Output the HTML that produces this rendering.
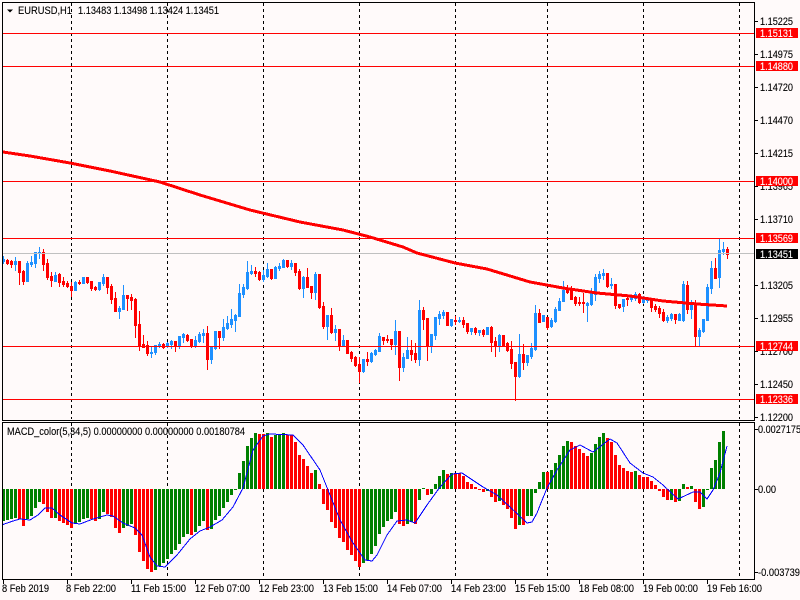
<!DOCTYPE html>
<html><head><meta charset="utf-8"><title>EURUSD,H1</title>
<style>
html,body{margin:0;padding:0;background:#fffafa;width:800px;height:600px;overflow:hidden}
svg{display:block}
text{font-family:"Liberation Sans",sans-serif;font-size:11px;fill:#000;stroke:#000;stroke-width:.12px}
text.w{fill:#fff;stroke:#fff}
</style></head><body>
<svg width="800" height="600" viewBox="0 0 800 600" xmlns="http://www.w3.org/2000/svg">
<rect width="800" height="600" fill="#fffafa"/>
<g shape-rendering="crispEdges" fill="none">
<path stroke="#000" stroke-dasharray="3 3" d="M71.5 3V419M167.5 3V419M263.5 3V419M359.5 3V419M455.5 3V419M547.5 3V419M643.5 3V419M739.5 3V419M71.5 423V579M167.5 423V579M263.5 423V579M359.5 423V579M455.5 423V579M547.5 423V579M643.5 423V579M739.5 423V579"/>
<!-- histogram -->
<path stroke="#008000" stroke-width="3" d="M3.5 489V521M7.5 489V520M11.5 489V519M15.5 489V518M27.5 489V519M31.5 489V516M35.5 489V508M39.5 489V502M55.5 489V518M75.5 489V524M79.5 489V522M83.5 489V519M87.5 489V518M99.5 489V519M103.5 489V512M123.5 489V528M127.5 489V526M131.5 489V524M155.5 489V570M159.5 489V566M163.5 489V563M167.5 489V559M171.5 489V554M175.5 489V550M179.5 489V544M183.5 489V537M187.5 489V534M195.5 489V532M199.5 489V526M203.5 489V521M211.5 489V529M215.5 489V520M219.5 489V516M223.5 489V508M227.5 489V502M231.5 489V495M235.5 489V490M239.5 473V489M243.5 461V489M247.5 446V489M251.5 438V489M255.5 433V489M267.5 433V489M275.5 435V489M279.5 435V489M283.5 433V489M315.5 470V489M363.5 489V563M367.5 489V560M371.5 489V554M375.5 489V546M379.5 489V534M383.5 489V527M387.5 489V521M391.5 489V519M395.5 489V512M407.5 489V524M411.5 489V522M419.5 489V500M423.5 488V489M431.5 489V494M435.5 484V489M439.5 476V489M443.5 470V489M451.5 473V489M487.5 489V491M499.5 489V501M519.5 489V525M527.5 489V516M531.5 489V516M535.5 489V493M539.5 482V489M543.5 472V489M551.5 470V489M555.5 463V489M559.5 455V489M563.5 446V489M567.5 441V489M591.5 453V489M595.5 444V489M599.5 437V489M603.5 433V489M635.5 471V489M671.5 489V500M679.5 489V501M683.5 484V489M691.5 486V489M703.5 489V507M707.5 489V490M711.5 468V489M715.5 460V489M719.5 442V489M723.5 431V489"/>
<path stroke="#ff0000" stroke-width="3" d="M19.5 489V519M23.5 489V526M43.5 489V504M47.5 489V512M51.5 489V518M59.5 489V521M63.5 489V523M67.5 489V525M71.5 489V528M91.5 489V519M95.5 489V521M107.5 489V514M111.5 489V517M115.5 489V528M119.5 489V533M135.5 489V535M139.5 489V552M143.5 489V561M147.5 489V569M151.5 489V572M191.5 489V535M207.5 489V530M259.5 434V489M263.5 434V489M271.5 437V489M287.5 435V489M291.5 435V489M295.5 442V489M299.5 455V489M303.5 459V489M307.5 466V489M311.5 473V489M319.5 484V489M323.5 489V504M327.5 489V510M331.5 489V522M335.5 489V528M339.5 489V538M343.5 489V542M347.5 489V550M351.5 489V555M355.5 489V561M359.5 489V567M399.5 489V524M403.5 489V526M415.5 489V524M427.5 489V495M447.5 474V489M455.5 473V489M459.5 473V489M463.5 476V489M467.5 482V489M471.5 484V489M475.5 487V489M479.5 489V490M483.5 489V492M491.5 489V497M495.5 489V502M503.5 489V505M507.5 489V509M511.5 489V518M515.5 489V529M523.5 489V525M547.5 472V489M571.5 442V489M575.5 446V489M579.5 449V489M583.5 453V489M587.5 456V489M607.5 438V489M611.5 442V489M615.5 455V489M619.5 465V489M623.5 468V489M627.5 471V489M631.5 472V489M639.5 475V489M643.5 477V489M647.5 477V489M651.5 481V489M655.5 485V489M659.5 489V491M663.5 489V497M667.5 489V500M675.5 489V502M687.5 487V489M695.5 489V502M699.5 489V509"/>
<!-- blue candles -->
<path stroke="#1e90ff" d="M3.5 256V264M15.5 257V271M27.5 261V282M31.5 256V267M35.5 252V268M39.5 247V259M55.5 272V282M75.5 281V291M83.5 277V284M99.5 282V291M103.5 274V286M119.5 306V319M123.5 285V310M151.5 347V358M155.5 345V355M159.5 342V348M167.5 342V348M171.5 340V349M179.5 336V349M183.5 333V343M195.5 336V348M199.5 332V343M203.5 329V343M211.5 346V364M215.5 331V350M223.5 319V341M227.5 316V330M231.5 309V328M235.5 314V332M239.5 284V317M243.5 284V298M247.5 261V290M251.5 265V275M263.5 270V282M267.5 263V278M275.5 266V279M279.5 263V271M283.5 259V268M291.5 260V270M303.5 276V298M315.5 272V300M327.5 315V340M335.5 325V341M343.5 335V346M363.5 359V373M371.5 352V363M375.5 349V356M379.5 333V352M395.5 320V355M403.5 353V372M407.5 337V359M419.5 300V366M431.5 334V353M435.5 317V340M439.5 311V325M443.5 310V319M451.5 319V327M459.5 317V323M471.5 328V335M479.5 330V336M487.5 327V335M499.5 334V352M519.5 334V378M527.5 355V366M531.5 343V359M535.5 305V351M543.5 315V322M551.5 318V328M555.5 307V323M559.5 298V311M563.5 281V302M587.5 302V322M591.5 288V306M595.5 274V301M599.5 271V283M603.5 269V280M611.5 278V289M623.5 299V312M631.5 295V302M635.5 292V301M643.5 296V304M647.5 297V303M667.5 315V323M671.5 313V321M679.5 313V321M683.5 281V322M691.5 300V319M699.5 328V346M703.5 319V333M707.5 284V321M711.5 261V294M719.5 238V288M723.5 242V255"/>
<path stroke="#1e90ff" stroke-width="3" d="M3.5 259V262M15.5 261V265M27.5 263V282M31.5 262V265M35.5 252V264M39.5 252V254M55.5 275V282M75.5 282V291M83.5 277V284M99.5 282V290M103.5 277V284M119.5 308V312M123.5 295V310M151.5 352V354M155.5 345V353M159.5 344V347M167.5 343V347M171.5 341V345M179.5 336V347M183.5 334V338M195.5 340V346M199.5 334V342M203.5 333V336M211.5 347V360M215.5 331V349M223.5 327V338M227.5 323V329M231.5 319V325M235.5 315V321M239.5 293V317M243.5 287V295M247.5 272V289M251.5 271V274M263.5 275V280M267.5 269V277M275.5 267V279M279.5 266V269M283.5 260V268M291.5 263V267M303.5 277V289M315.5 274V293M327.5 315V327M335.5 329V333M343.5 340V346M363.5 359V372M371.5 353V362M375.5 350V355M379.5 336V352M395.5 331V345M403.5 357V368M407.5 350V359M419.5 310V360M431.5 334V346M435.5 317V336M439.5 314V319M443.5 312V316M451.5 319V326M459.5 320V322M471.5 328V332M479.5 330V333M487.5 327V335M499.5 335V346M519.5 354V377M527.5 355V363M531.5 348V357M535.5 313V350M543.5 315V322M551.5 320V327M555.5 309V322M559.5 301V311M563.5 290V302M587.5 303V306M591.5 293V305M595.5 277V295M599.5 274V279M603.5 273V276M611.5 284V286M623.5 299V307M631.5 297V300M635.5 294V299M643.5 299V303M647.5 298V301M667.5 317V321M671.5 314V319M679.5 314V321M683.5 284V321M691.5 304V310M699.5 330V337M703.5 319V332M707.5 287V321M711.5 268V289M719.5 250V278M723.5 249V252"/>
<!-- red candles -->
<path stroke="#ff0000" d="M7.5 259V265M11.5 260V268M19.5 261V285M23.5 270V285M43.5 249V271M47.5 259V280M51.5 272V287M59.5 273V287M63.5 277V287M67.5 281V288M71.5 282V297M79.5 280V285M87.5 277V284M91.5 281V291M95.5 286V291M107.5 277V294M111.5 284V304M115.5 292V312M127.5 295V311M131.5 294V310M135.5 298V338M139.5 311V351M143.5 335V348M147.5 341V356M163.5 343V349M175.5 341V352M187.5 334V342M191.5 339V348M207.5 326V370M219.5 331V349M255.5 267V277M259.5 271V281M271.5 269V280M287.5 260V268M295.5 263V276M299.5 269V290M307.5 268V288M311.5 286V299M319.5 274V309M323.5 302V329M331.5 308V334M339.5 329V351M347.5 340V354M351.5 351V362M355.5 356V367M359.5 357V383M367.5 352V366M383.5 337V345M387.5 335V343M391.5 339V350M399.5 331V381M411.5 340V361M415.5 343V363M423.5 307V330M427.5 318V361M447.5 312V326M455.5 316V325M463.5 317V328M467.5 323V334M475.5 327V335M483.5 329V337M491.5 326V352M495.5 337V357M503.5 335V347M507.5 342V352M511.5 341V369M515.5 362V401M523.5 344V370M539.5 309V323M547.5 317V330M567.5 285V294M571.5 286V300M575.5 296V306M579.5 297V306M583.5 293V313M607.5 273V288M615.5 284V309M619.5 304V309M627.5 295V306M639.5 293V304M651.5 298V312M655.5 304V312M659.5 306V318M663.5 309V322M675.5 314V324M687.5 281V314M695.5 300V347M715.5 258V279M727.5 247V259"/>
<path stroke="#ff0000" stroke-width="3" d="M7.5 260V264M11.5 261V265M19.5 261V273M23.5 271V282M43.5 252V265M47.5 263V278M51.5 276V281M59.5 274V283M63.5 281V285M67.5 283V287M71.5 286V291M79.5 282V284M87.5 277V283M91.5 281V289M95.5 287V290M107.5 277V288M111.5 286V300M115.5 298V312M127.5 295V299M131.5 297V301M135.5 299V326M139.5 324V346M143.5 344V348M147.5 345V354M163.5 344V348M175.5 341V347M187.5 335V341M191.5 339V346M207.5 333V360M219.5 331V338M255.5 271V274M259.5 272V280M271.5 269V279M287.5 260V267M295.5 263V273M299.5 271V289M307.5 277V288M311.5 286V293M319.5 274V308M323.5 306V327M331.5 315V333M339.5 329V346M347.5 340V354M351.5 352V359M355.5 357V366M359.5 364V372M367.5 359V362M383.5 337V341M387.5 339V341M391.5 339V345M399.5 331V368M411.5 350V355M415.5 353V360M423.5 310V320M427.5 318V346M447.5 312V326M455.5 320V322M463.5 320V325M467.5 323V332M475.5 328V333M483.5 330V335M491.5 327V343M495.5 341V346M503.5 335V346M507.5 343V351M511.5 349V364M515.5 362V377M523.5 354V363M539.5 313V323M547.5 317V328M567.5 290V293M571.5 290V300M575.5 297V304M579.5 302V304M583.5 302V304M607.5 273V287M615.5 284V306M619.5 304V308M627.5 298V300M639.5 294V303M651.5 298V308M655.5 306V310M659.5 308V314M663.5 312V321M675.5 314V320M687.5 285V310M695.5 303V337M715.5 268V279M727.5 249V255"/>
<!-- horizontal lines -->
<path stroke="#c0c0c0" d="M3 253.5H755"/>
<path stroke="#ff0000" d="M3 33.5H755M3 66.5H755M3 181.5H755M3 238.5H755M3 346.5H755M3 399.5H755"/>
<!-- frame and ticks -->
<path stroke="#000" d="M2.5 2.5H754.5V420.5H2.5ZM2.5 422.5H754.5V579.5H2.5Z"/>
<path stroke="#000" d="M755 21.5H758M755 54.5H758M755 87.5H758M755 120.5H758M755 153.5H758M755 186.5H758M755 219.5H758M755 285.5H758M755 318.5H758M755 351.5H758M755 384.5H758M755 417.5H758M755 429.5H758M755 489.5H758M755 572.5H758M3.5 580V584M67.5 580V584M131.5 580V584M195.5 580V584M259.5 580V584M323.5 580V584M387.5 580V584M451.5 580V584M515.5 580V584M579.5 580V584M643.5 580V584M707.5 580V584"/>
<polyline stroke="#ff0000" stroke-width="3" points="3,152 30,156 70,163 110,171 160,182 200,195 250,210 300,222 343,230 370,237 403,247 417,253 455,263 487,269 530,282 563,288 597,293 630,296 663,301 697,304 727,306"/>
<polyline stroke="#0000ff" stroke-width="1" points="3,524.5 13,521 20,519 30,520 38,515 45,508 52,508 60,515 72,523 80,524 93,519 107,515 113,516 123,523 135,528 142,535 150,557 157,566 165,567 177,555 190,539 200,531 210,527 222,520 233,507 243,488 253,450 263,436 270,434 293,435 303,445 320,470 328,490 340,520 353,543 365,560 372,561 377,555 387,535 397,521 407,520 415,523 427,505 440,487 452,474 462,473 483,487 497,495 510,507 527,523 532,522 537,513 547,488 557,470 570,450 580,445 593,452 610,439 617,443 630,463 643,473 653,477 663,485 678,499 693,492 700,492 707,499 713,490 720,473 727,446"/>
</g>
<path d="M7 9.5H13L10 12.5Z" fill="#000" stroke="none"/>
<text x="18" y="14" textLength="54" lengthAdjust="spacingAndGlyphs">EURUSD,H1</text>
<text x="78" y="14" textLength="141" lengthAdjust="spacingAndGlyphs">1.13483 1.13498 1.13424 1.13451</text>
<text x="7" y="435" textLength="238" lengthAdjust="spacingAndGlyphs">MACD_color(5,34,5) 0.00000000 0.00000000 0.00180784</text>
<g>
<text x="760" y="25" textLength="33" lengthAdjust="spacingAndGlyphs">1.15225</text>
<text x="760" y="58" textLength="33" lengthAdjust="spacingAndGlyphs">1.14975</text>
<text x="760" y="91" textLength="33" lengthAdjust="spacingAndGlyphs">1.14720</text>
<text x="760" y="124" textLength="33" lengthAdjust="spacingAndGlyphs">1.14470</text>
<text x="760" y="157" textLength="33" lengthAdjust="spacingAndGlyphs">1.14215</text>
<text x="760" y="190" textLength="33" lengthAdjust="spacingAndGlyphs">1.13965</text>
<text x="760" y="223" textLength="33" lengthAdjust="spacingAndGlyphs">1.13710</text>
<text x="760" y="289" textLength="33" lengthAdjust="spacingAndGlyphs">1.13205</text>
<text x="760" y="322" textLength="33" lengthAdjust="spacingAndGlyphs">1.12955</text>
<text x="760" y="355" textLength="33" lengthAdjust="spacingAndGlyphs">1.12700</text>
<text x="760" y="388" textLength="33" lengthAdjust="spacingAndGlyphs">1.12450</text>
<text x="760" y="421" textLength="33" lengthAdjust="spacingAndGlyphs">1.12200</text>
</g>
<g fill="#ff0000" shape-rendering="crispEdges">
<rect x="756" y="28" width="42" height="10"/><rect x="756" y="61" width="42" height="10"/><rect x="756" y="176" width="42" height="10"/><rect x="756" y="233" width="42" height="10"/><rect x="756" y="341" width="42" height="10"/><rect x="756" y="394" width="42" height="10"/>
<rect x="756" y="249" width="42" height="10" fill="#000"/>
</g>
<g>
<text class="w" x="760" y="37" textLength="33" lengthAdjust="spacingAndGlyphs">1.15131</text>
<text class="w" x="760" y="70" textLength="33" lengthAdjust="spacingAndGlyphs">1.14880</text>
<text class="w" x="760" y="185" textLength="33" lengthAdjust="spacingAndGlyphs">1.14000</text>
<text class="w" x="760" y="242" textLength="33" lengthAdjust="spacingAndGlyphs">1.13569</text>
<text class="w" x="760" y="258" textLength="33" lengthAdjust="spacingAndGlyphs">1.13451</text>
<text class="w" x="760" y="350" textLength="33" lengthAdjust="spacingAndGlyphs">1.12744</text>
<text class="w" x="760" y="403" textLength="33" lengthAdjust="spacingAndGlyphs">1.12336</text>
</g>
<text x="758" y="433" textLength="43" lengthAdjust="spacingAndGlyphs">0.0027175</text>
<text x="758" y="493" textLength="18" lengthAdjust="spacingAndGlyphs">0.00</text>
<text x="758" y="576" textLength="42" lengthAdjust="spacingAndGlyphs">-0.003739</text>
<g>
<text x="2" y="592" textLength="47" lengthAdjust="spacingAndGlyphs">8 Feb 2019</text>
<text x="66" y="592" textLength="50" lengthAdjust="spacingAndGlyphs">8 Feb 22:00</text>
<text x="131" y="592" textLength="55" lengthAdjust="spacingAndGlyphs">11 Feb 15:00</text>
<text x="195" y="592" textLength="55" lengthAdjust="spacingAndGlyphs">12 Feb 07:00</text>
<text x="259" y="592" textLength="55" lengthAdjust="spacingAndGlyphs">12 Feb 23:00</text>
<text x="323" y="592" textLength="55" lengthAdjust="spacingAndGlyphs">13 Feb 15:00</text>
<text x="387" y="592" textLength="55" lengthAdjust="spacingAndGlyphs">14 Feb 07:00</text>
<text x="451" y="592" textLength="55" lengthAdjust="spacingAndGlyphs">14 Feb 23:00</text>
<text x="515" y="592" textLength="55" lengthAdjust="spacingAndGlyphs">15 Feb 15:00</text>
<text x="579" y="592" textLength="55" lengthAdjust="spacingAndGlyphs">18 Feb 08:00</text>
<text x="643" y="592" textLength="55" lengthAdjust="spacingAndGlyphs">19 Feb 00:00</text>
<text x="707" y="592" textLength="55" lengthAdjust="spacingAndGlyphs">19 Feb 16:00</text>
</g>
</svg>
</body></html>
